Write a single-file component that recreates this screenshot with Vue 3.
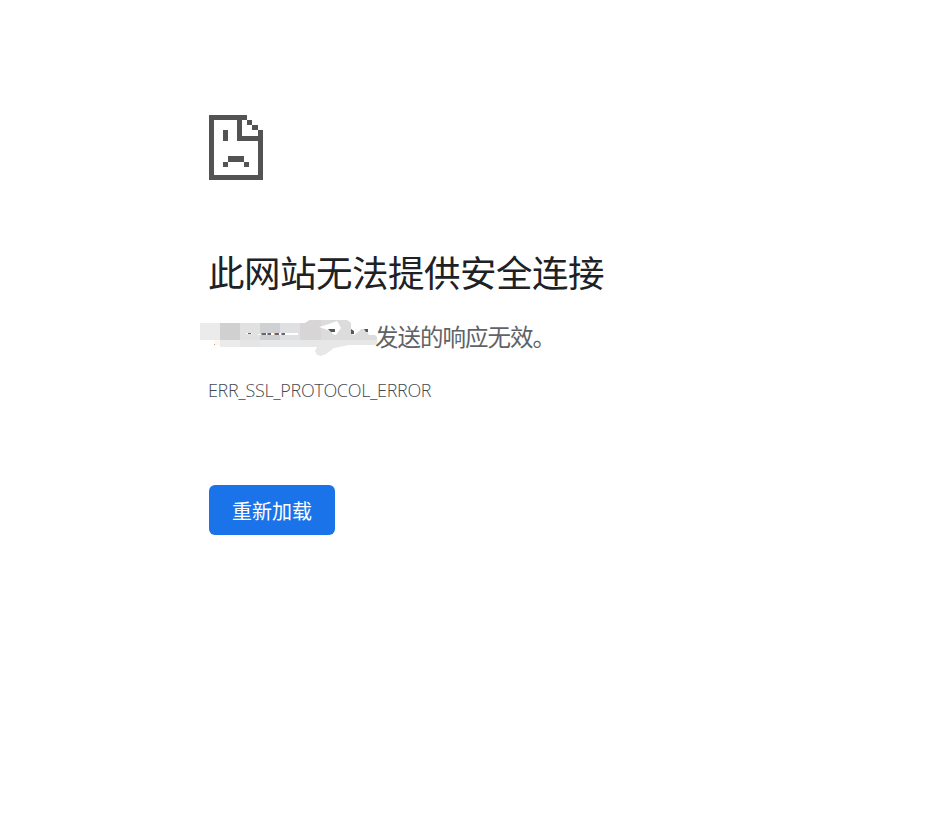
<script setup>
const tiles = [
  { x: 0, y: 3, w: 20, h: 17, fill: '#ebebeb' },
  { x: 20, y: 3, w: 20, h: 17, fill: '#d0d0d0' },
  { x: 40, y: 3, w: 20, h: 17, fill: '#e1e1e1' },
  { x: 60, y: 3, w: 20, h: 17, fill: '#cfd0d2' },
  { x: 80, y: 3, w: 20, h: 17, fill: '#dfe0e1' },
  { x: 14, y: 20, w: 6, h: 5, fill: '#f8f8f8' },
  { x: 20, y: 20, w: 20, h: 7, fill: '#ebebeb' },
  { x: 40, y: 20, w: 20, h: 7, fill: '#e5e5e5' },
  { x: 60, y: 20, w: 40, h: 7, fill: '#e7e8ea' }
]
</script>

<template>
  <main class="page">
    <svg class="sad-file" width="54" height="65" viewBox="0 0 54 65" fill="#535353" shape-rendering="crispEdges" aria-hidden="true">
      <path d="M0 0H38V5H33V21H49V15H54V65H0ZM5 5V60H49V26H28V5Z" fill-rule="evenodd" />
      <path d="M38 5h5v5h-5zM43 10h6v5h-6zM14 15h5v11h-5zM19 41h16v6H19zM14 47h5v5h-5zM35 47h5v5h-5z" />
    </svg>
    <h1>此网站无法提供安全连接</h1>
    <p class="summary">
      <svg class="mask" width="180" height="38" viewBox="0 0 180 38" aria-hidden="true">
        <rect v-for="(t, i) in tiles" :key="i" :x="t.x" :y="t.y" :width="t.w" :height="t.h" :fill="t.fill" />
        <path d="M100 3h5l5-3h37l4 3v11l3 1 4-3 3-3h5l3 6h6l2 2v3H100Z" fill="#dddcdc" />
        <path d="M100 3h5l5-3h11v20h-21Z" fill="#d7d5d6" />
        <path d="M100 20h77v3l-2 2h-26l-15 3-8 6-5 2-4-1-2-4 2-4h-17Z" fill="#e7e7e7" />
        <path d="M119 7l10-3 8-3 2 3 2 4-5 7-4-1v-2l-4-2Z" fill="#fff" />
        <path d="M46 13h6v1h14v-1h32v2H58v-1H46Z" fill="#fff" />
        <path d="M48 13h3v1h-3zM62 13h4v2h-4zM68 13h3v2h-3zM75 13h4v2h-4zM82 13h3v2h-3z" fill="#656575" />
        <path d="M61 13h1v2h-1zM67 13h1v2h-1zM74 13h1v2h-1zM81 13h1v2h-1zM14 24h1v1h-1z" fill="#e49a67" />
        <path d="M128 9h7v3h-4zM151 9l3 2v3h-3zM164 9h4v3h-2z" fill="#515763" />
      </svg>
      <span>发送的响应无效。</span>
    </p>
    <p class="code">ERR_SSL_PROTOCOL_ERROR</p>
    <button type="button">重新加载</button>
  </main>
</template>

<style>
body {
  margin: 0;
  background: #fff;
}
</style>

<style scoped>
.page {
  box-sizing: border-box;
  width: 934px;
  height: 825px;
  padding: 115px 200px 0 208px;
  display: flex;
  flex-direction: column;
  align-items: flex-start;
  font-family: "Noto Sans CJK SC", sans-serif;
  font-weight: 400;
  color: #5f6368;
}
.sad-file {
  display: block;
  margin-left: 1px;
}
h1 {
  margin: 68px 0 0;
  font-size: 36.5px;
  font-weight: 400;
  line-height: 48px;
  letter-spacing: -0.5px;
  color: #202124;
  white-space: nowrap;
}
.summary {
  display: flex;
  align-items: flex-start;
  margin: 24px 0 0 -8px;
  height: 38px;
  white-space: nowrap;
}
.mask {
  flex: none;
  margin-right: -5px;
}
.summary span {
  font-size: 23.5px;
  line-height: 32px;
  letter-spacing: -1px;
}
.code {
  margin: 19px 0 0;
  font-family: "Open Sans", "Noto Sans", sans-serif;
  font-size: 18px;
  font-weight: 350;
  line-height: 26px;
  letter-spacing: -0.33px;
  color: #45494e;
}
button {
  width: 126px;
  height: 50px;
  margin: 82px 0 0 1px;
  padding: 1px 0 0;
  border: 0;
  border-radius: 6px;
  background: #1a73e8;
  color: #fff;
  font-family: inherit;
  font-size: 20px;
  font-weight: 400;
  line-height: 49px;
}
</style>
